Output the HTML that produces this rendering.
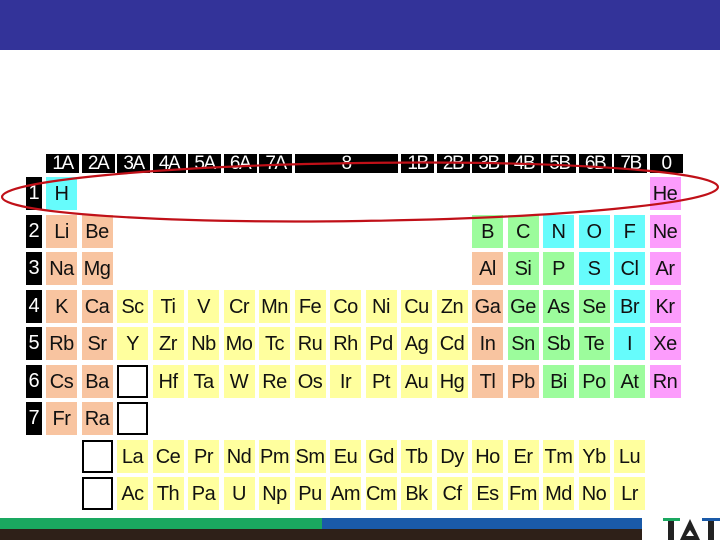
<!DOCTYPE html>
<html><head><meta charset="utf-8"><style>
*{margin:0;padding:0;box-sizing:border-box}
body{width:720px;height:540px;position:relative;overflow:hidden;background:#fff;font-family:"Liberation Sans",Arial,sans-serif}
.e{position:absolute;width:31px;height:33px;line-height:35px;text-align:center;font-size:20px;color:#111;letter-spacing:-0.5px;white-space:nowrap}
.h{position:absolute;top:154px;height:19px;line-height:20px;background:#000;color:#fff;font-size:19px;text-align:center;width:33px;letter-spacing:-1.5px}
.p{position:absolute;left:26px;width:16px;height:33px;line-height:33px;background:#000;color:#fff;font-size:20px;text-align:center}
.x{position:absolute;width:31px;height:33px;border:2px solid #000;background:#fff}
.s{background:#f8c4a0}.y{background:#ffff9e}.g{background:#9cfc9c}.c{background:#66fcfc}.n{background:#fc9cfc}
.c1{left:46px}.c2{left:81.5px}.c3{left:117px}.c4{left:152.5px}.c5{left:188px}.c6{left:223.5px}.c7{left:259px}.c8{left:294.5px}.c9{left:330px}.c10{left:365.5px}.c11{left:401px}.c12{left:436.5px}.c13{left:472px}.c14{left:507.5px}.c15{left:543px}.c16{left:578.5px}.c17{left:614px}.c18{left:649.5px}
.r1{top:177px}.r2{top:214.5px}.r3{top:252px}.r4{top:289.5px}.r5{top:327px}.r6{top:364.5px}.r7{top:402px}.r8{top:439.5px}.r9{top:477px}
</style></head><body>
<div style="position:absolute;left:0;top:0;width:720px;height:50px;background:#333399"></div>

<div class="h c1">1A</div><div class="h c2">2A</div><div class="h c3">3A</div><div class="h c4">4A</div><div class="h c5">5A</div><div class="h c6">6A</div><div class="h c7">7A</div>
<div class="h c8" style="width:103px">8</div>
<div class="h c11">1B</div><div class="h c12">2B</div><div class="h c13">3B</div><div class="h c14">4B</div><div class="h c15">5B</div><div class="h c16">6B</div><div class="h c17">7B</div><div class="h c18">0</div>

<div class="p r1">1</div><div class="p r2">2</div><div class="p r3">3</div><div class="p r4">4</div><div class="p r5">5</div><div class="p r6">6</div><div class="p r7">7</div>

<div class="e c c1 r1">H</div><div class="e n c18 r1">He</div>

<div class="e s c1 r2">Li</div><div class="e s c2 r2">Be</div>
<div class="e g c13 r2">B</div><div class="e g c14 r2">C</div><div class="e c c15 r2">N</div><div class="e c c16 r2">O</div><div class="e c c17 r2">F</div><div class="e n c18 r2">Ne</div>

<div class="e s c1 r3">Na</div><div class="e s c2 r3">Mg</div>
<div class="e s c13 r3">Al</div><div class="e g c14 r3">Si</div><div class="e g c15 r3">P</div><div class="e c c16 r3">S</div><div class="e c c17 r3">Cl</div><div class="e n c18 r3">Ar</div>

<div class="e s c1 r4">K</div><div class="e s c2 r4">Ca</div><div class="e y c3 r4">Sc</div><div class="e y c4 r4">Ti</div><div class="e y c5 r4">V</div><div class="e y c6 r4">Cr</div><div class="e y c7 r4">Mn</div><div class="e y c8 r4">Fe</div><div class="e y c9 r4">Co</div><div class="e y c10 r4">Ni</div><div class="e y c11 r4">Cu</div><div class="e y c12 r4">Zn</div><div class="e s c13 r4">Ga</div><div class="e g c14 r4">Ge</div><div class="e g c15 r4">As</div><div class="e g c16 r4">Se</div><div class="e c c17 r4">Br</div><div class="e n c18 r4">Kr</div>

<div class="e s c1 r5">Rb</div><div class="e s c2 r5">Sr</div><div class="e y c3 r5">Y</div><div class="e y c4 r5">Zr</div><div class="e y c5 r5">Nb</div><div class="e y c6 r5">Mo</div><div class="e y c7 r5">Tc</div><div class="e y c8 r5">Ru</div><div class="e y c9 r5">Rh</div><div class="e y c10 r5">Pd</div><div class="e y c11 r5">Ag</div><div class="e y c12 r5">Cd</div><div class="e s c13 r5">In</div><div class="e g c14 r5">Sn</div><div class="e g c15 r5">Sb</div><div class="e g c16 r5">Te</div><div class="e c c17 r5">I</div><div class="e n c18 r5">Xe</div>

<div class="e s c1 r6">Cs</div><div class="e s c2 r6">Ba</div><div class="x c3 r6"></div><div class="e y c4 r6">Hf</div><div class="e y c5 r6">Ta</div><div class="e y c6 r6">W</div><div class="e y c7 r6">Re</div><div class="e y c8 r6">Os</div><div class="e y c9 r6">Ir</div><div class="e y c10 r6">Pt</div><div class="e y c11 r6">Au</div><div class="e y c12 r6">Hg</div><div class="e s c13 r6">Tl</div><div class="e s c14 r6">Pb</div><div class="e g c15 r6">Bi</div><div class="e g c16 r6">Po</div><div class="e g c17 r6">At</div><div class="e n c18 r6">Rn</div>

<div class="e s c1 r7">Fr</div><div class="e s c2 r7">Ra</div><div class="x c3 r7"></div>

<div class="x c2 r8"></div><div class="e y c3 r8">La</div><div class="e y c4 r8">Ce</div><div class="e y c5 r8">Pr</div><div class="e y c6 r8">Nd</div><div class="e y c7 r8">Pm</div><div class="e y c8 r8">Sm</div><div class="e y c9 r8">Eu</div><div class="e y c10 r8">Gd</div><div class="e y c11 r8">Tb</div><div class="e y c12 r8">Dy</div><div class="e y c13 r8">Ho</div><div class="e y c14 r8">Er</div><div class="e y c15 r8">Tm</div><div class="e y c16 r8">Yb</div><div class="e y c17 r8">Lu</div>

<div class="x c2 r9"></div><div class="e y c3 r9">Ac</div><div class="e y c4 r9">Th</div><div class="e y c5 r9">Pa</div><div class="e y c6 r9">U</div><div class="e y c7 r9">Np</div><div class="e y c8 r9">Pu</div><div class="e y c9 r9">Am</div><div class="e y c10 r9">Cm</div><div class="e y c11 r9">Bk</div><div class="e y c12 r9">Cf</div><div class="e y c13 r9">Es</div><div class="e y c14 r9">Fm</div><div class="e y c15 r9">Md</div><div class="e y c16 r9">No</div><div class="e y c17 r9">Lr</div>

<svg style="position:absolute;left:0;top:0" width="720" height="540">
<ellipse cx="360" cy="192" rx="358" ry="29" transform="rotate(-0.8 360 192)" fill="none" stroke="#c01018" stroke-width="2.2"/>
<rect x="0" y="518" width="322" height="11" fill="#1aa860"/>
<rect x="322" y="518" width="320" height="11" fill="#1a5aa8"/>
<rect x="0" y="529" width="642" height="11" fill="#2e2018"/>
<rect x="663" y="518" width="17" height="3" fill="#1aa860"/>
<rect x="668" y="521" width="6" height="19" fill="#222"/>
<polygon points="690,519 680,540 700,540" fill="#222"/>
<polygon points="690,530 686,536 694,536" fill="#fff"/>
<rect x="702" y="518" width="18" height="3" fill="#1a5aa8"/>
<rect x="708" y="521" width="6" height="19" fill="#222"/>
</svg>
</body></html>
